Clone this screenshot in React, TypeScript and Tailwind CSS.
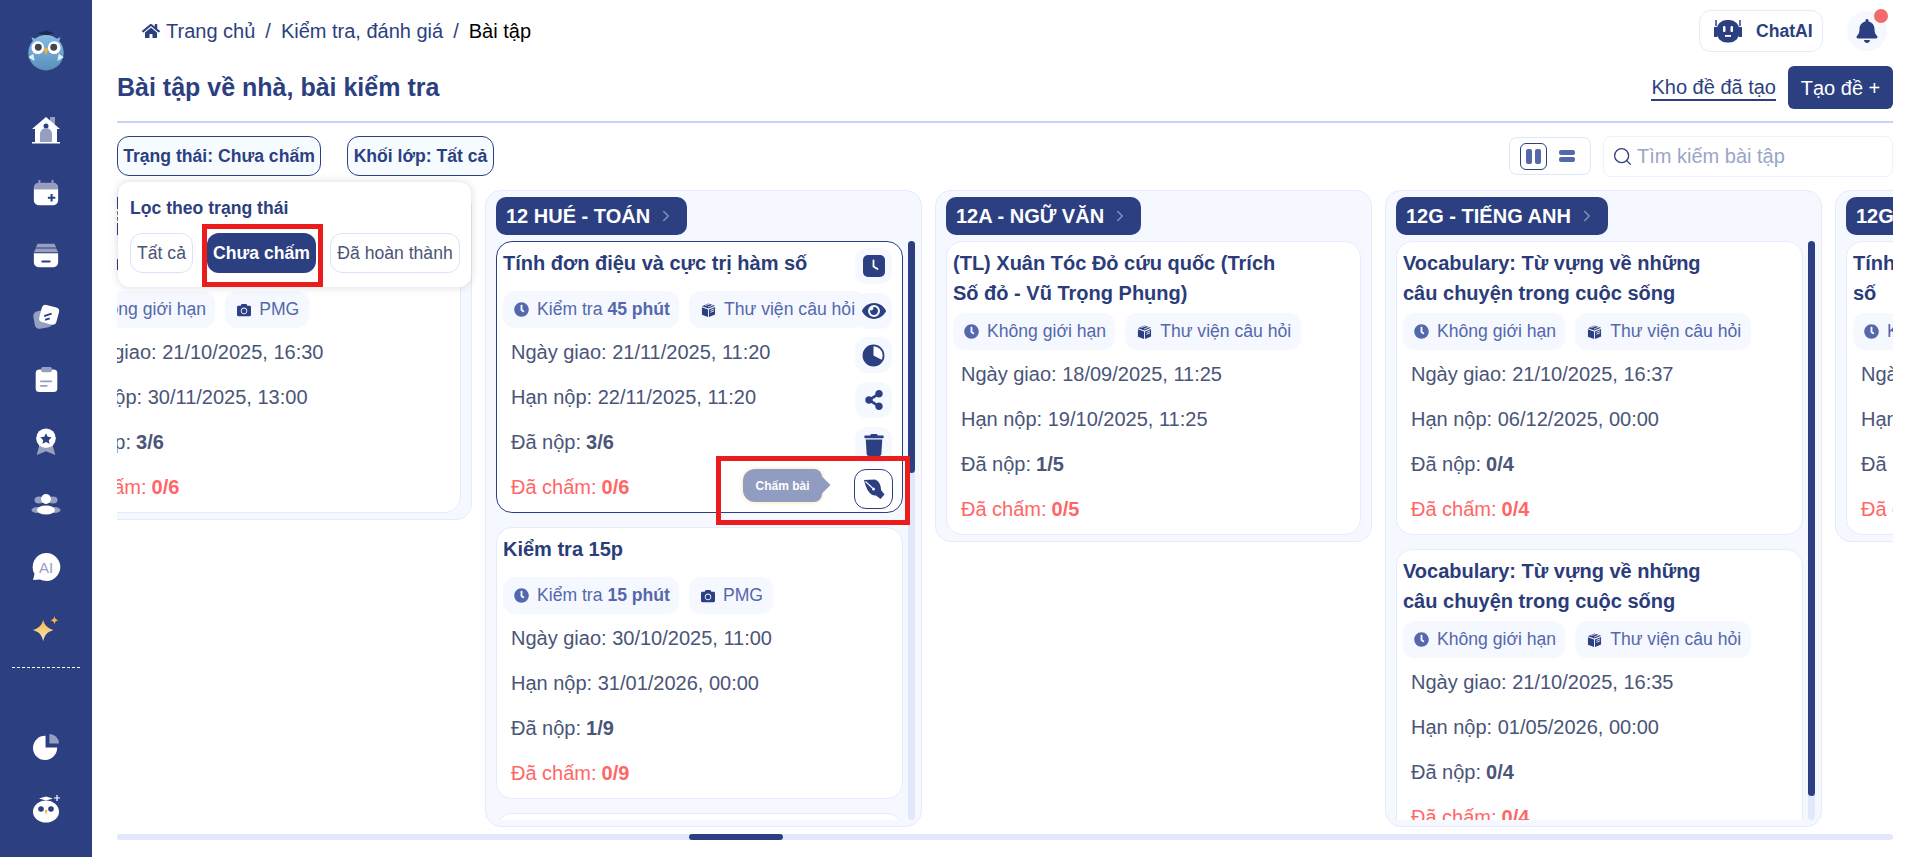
import React from "react"
import { ChevronRight, Search } from "lucide-react"
import { FaBell, FaCamera, FaClock, FaEye, FaHome, FaShareAlt, FaTrash } from "react-icons/fa"

const BooksIcon = ({ className }: { className?: string }) => (
    <svg viewBox="0 0 16 16" className={className} fill="currentColor">
        <path d="M1 4 8 1 15 3.500 8 6.500Z" />
        <path d="M1 5 7.500 7.500V15.500L1 13Z" />
        <path d="M8.500 7.500 15 4.800V12.800L8.500 15.500Z" />
        <path d="M10 8.500 14 6.800M10 10.500 14 8.800" stroke="white" strokeWidth="0.9" />
        <path d="M4.500 3.400 10 1.200M7.500 4.800 13 2.600" stroke="white" strokeWidth="0.8" />
    </svg>
)

const SquareClock = () => (
    <svg viewBox="0 0 24 24" className="w-[24px] h-[24px]">
        <rect x="1" y="1" width="22" height="22" rx="5" fill="#2c3f80" />
        <path d="M11.500 6.500V12.500L15.500 15" stroke="white" strokeWidth="1.800" fill="none" strokeLinecap="round" />
    </svg>
)

const PieIcon = () => (
    <svg viewBox="0 0 24 24" className="w-[23px] h-[23px]">
        <circle cx="12" cy="12" r="10.500" fill="white" stroke="#2c3f80" strokeWidth="1.800" />
        <path d="M12 12V1.500A10.500 10.500 0 1 0 21.500 17Z" fill="#2c3f80" />
    </svg>
)

// ngoi but cham bai
const NibIcon = () => (
    <svg viewBox="0 0 24 24" className="w-[24px] h-[24px]" fill="#2c3f80">
        <path d="M2 3 13 2.500C17 4 19 8 19 13L22.500 17.500 18.500 22 14 18.500C9 19 5 15 2 3Z" />
        <path d="M3.500 4.500 10.500 11" stroke="white" strokeWidth="1.100" />
        <circle cx="11.500" cy="12" r="1.500" fill="white" />
    </svg>
)

const OwlLogo = () => (
    <svg viewBox="0 0 44 46" className="w-[40px] h-[44px]">
        <defs>
            <linearGradient id="owlBody" x1="0" y1="0" x2="0" y2="1">
                <stop offset="0" stopColor="#86bce3" />
                <stop offset="1" stopColor="#5890bb" />
            </linearGradient>
        </defs>
        <path d="M13 4.500 22 1.500 31 4.500 22 7Z" fill="#1f2a4f" />
        <path d="M6 9 9 17H35L38 9 30 12H14Z" fill="#86bce3" />
        <circle cx="22" cy="26" r="19.500" fill="url(#owlBody)" />
        <circle cx="13" cy="20.500" r="7" fill="white" />
        <circle cx="31" cy="20.500" r="7" fill="white" />
        <circle cx="13.500" cy="20" r="3.800" fill="#44464f" />
        <circle cx="30.500" cy="20" r="3.800" fill="#44464f" />
        <path d="M19.500 21H24.500L22 29Z" fill="#f4b63a" />
        <path d="M2.500 31 8 27 9.500 35ZM41.500 31 36 27 34.500 35Z" fill="#e4f0f9" />
    </svg>
)

const navIcons = [
    // truong hoc
    <svg viewBox="0 0 30 30" className="w-[30px] h-[30px]" key="home">
        <rect x="19" y="2" width="5" height="7" fill="#969fc0" />
        <path d="M15 2 29 14H26V27H4V14H1Z" fill="white" />
        <rect x="1" y="27" width="28" height="1.500" fill="white" />
        <circle cx="15" cy="11" r="2.500" fill="#2c3f80" />
        <path d="M9 27V19A6 6 0 0 1 21 19V27Z" fill="#969fc0" />
    </svg>,
    <svg viewBox="0 0 30 30" className="w-[28px] h-[28px]" key="cal">
        <path d="M2 9A5 5 0 0 1 7 4H23A5 5 0 0 1 28 9V11H2Z" fill="#969fc0" />
        <rect x="7" y="1" width="2" height="4" fill="#969fc0" />
        <rect x="21" y="1" width="2" height="4" fill="#969fc0" />
        <path d="M2 11H28V23A5 5 0 0 1 23 28H7A5 5 0 0 1 2 23Z" fill="white" />
        <path d="M21 16V24M17 20H25" stroke="#2c3f80" strokeWidth="2.200" />
    </svg>,
    <svg viewBox="0 0 30 30" className="w-[28px] h-[28px]" key="box">
        <path d="M6 3H24L26 7H4Z" fill="#969fc0" />
        <path d="M4 8H26L28 12H2Z" fill="#969fc0" />
        <path d="M2 13H28V23A5 5 0 0 1 23 28H7A5 5 0 0 1 2 23Z" fill="white" />
        <rect x="10" y="21" width="10" height="2" rx="1" fill="#2c3f80" />
    </svg>,
    <svg viewBox="0 0 30 30" className="w-[28px] h-[28px]" key="notes">
        <rect x="2" y="8" width="19" height="19" rx="5" fill="#969fc0" transform="rotate(-10 11 17)" />
        <rect x="9" y="3" width="19" height="19" rx="4" fill="white" transform="rotate(15 18 12)" />
        <path d="M13 14 21 11.500M14 18 19 16.500" stroke="#2c3f80" strokeWidth="2" />
    </svg>,
    <svg viewBox="0 0 30 30" className="w-[27px] h-[27px]" key="clip">
        <rect x="3" y="4" width="24" height="25" rx="4" fill="white" />
        <rect x="9" y="1" width="12" height="6" rx="2" fill="#969fc0" />
        <path d="M8 17H21M8 22H16" stroke="#969fc0" strokeWidth="2" />
    </svg>,
    <svg viewBox="0 0 30 30" className="w-[28px] h-[28px]" key="badge">
        <path d="M8 18 5 29 15 25 25 29 22 18Z" fill="#969fc0" />
        <circle cx="15" cy="11" r="10.500" fill="white" />
        <path d="M15 5.500 16.800 9.500 21 10 18 13 18.800 17 15 15 11.200 17 12 13 9 10 13.200 9.500Z" fill="#2c3f80" />
    </svg>,
    <svg viewBox="0 0 30 30" className="w-[30px] h-[30px]" key="users">
        <ellipse cx="8" cy="10" rx="4.500" ry="3.500" fill="#969fc0" />
        <ellipse cx="22" cy="10" rx="4.500" ry="3.500" fill="#969fc0" />
        <ellipse cx="6" cy="20" rx="5.500" ry="3" fill="#969fc0" />
        <ellipse cx="24" cy="20" rx="5.500" ry="3" fill="#969fc0" />
        <circle cx="15" cy="9" r="5" fill="white" />
        <ellipse cx="15" cy="20" rx="9" ry="4.500" fill="white" />
    </svg>,
    <svg viewBox="0 0 30 30" className="w-[30px] h-[30px]" key="ai">
        <path d="M15 1A14 14 0 1 1 9 27.500L2 28 3.500 22A14 14 0 0 1 15 1Z" fill="white" />
        <text x="15" y="20.500" textAnchor="middle" fontSize="15" fill="#969fc0" fontFamily="Liberation Sans, sans-serif">AI</text>
    </svg>,
    <svg viewBox="0 0 30 30" className="w-[28px] h-[28px]" key="spark">
        <defs>
            <linearGradient id="spark" x1="0" y1="0" x2="0" y2="1">
                <stop offset="0" stopColor="#f5b93e" />
                <stop offset="1" stopColor="#f7e3c0" />
            </linearGradient>
        </defs>
        <path d="M12 5C13.500 11 16 13.500 23 16 16 18.500 13.500 21 12 28 10.500 21 8 18.500 1 16 8 13.500 10.500 11 12 5Z" fill="url(#spark)" />
        <path d="M24 1C24.500 4 25.500 5 28.500 5.500 25.500 6 24.500 7 24 10 23.500 7 22.500 6 19.500 5.500 22.500 5 23.500 4 24 1Z" fill="#f5b93e" />
    </svg>,
]

type Row = { giao: string; han: string; nop: string; cham: string }
type TaskProps = Row & { title: string; time: React.ReactNode; source: "lib" | "pmg"; active?: boolean }

const Task = ({ title, time, source, giao, han, nop, cham, active }: TaskProps) => {
    return (
        <div className={`relative shrink-0 bg-white rounded-2xl border pt-[6px] pb-[3px] px-[6px] ${active ? "border-[#2c3f80]" : "border-[#e6ebfc]"}`}>
            <div className="min-h-[38px] mb-[5px] max-w-[330px] text-[20px] leading-[30px] font-bold text-[#2b3c7a]">{title}</div>
            <div className="flex gap-[10px] mb-[1px] whitespace-nowrap">
                <div className="flex items-center gap-[8px] h-[37px] pl-[11px] pr-[9px] rounded-xl bg-[#f5f8ff] text-[17.6px] text-[#5468ab]">
                    <FaClock className="w-[15px] h-[15px]" />
                    <span>{time}</span>
                </div>
                <div className="flex items-center gap-[8px] h-[37px] pl-[12px] pr-[10px] rounded-xl bg-[#f5f8ff] text-[17.6px] text-[#5468ab]">
                    {source === "lib" ? <BooksIcon className="w-[15px] h-[16px] text-[#2c3f80]" /> : <FaCamera className="w-[14px] h-[14px] text-[#2c3f80]" />}
                    <span>{source === "lib" ? "Thư viện câu hỏi" : "PMG"}</span>
                </div>
            </div>
            <div className="pl-[8px] text-[20px] text-[#4a5578] whitespace-nowrap">
                <div className="h-[45px] flex items-center">Ngày giao: {giao}</div>
                <div className="h-[45px] flex items-center">Hạn nộp: {han}</div>
                <div className="h-[45px] flex items-center gap-[5px]">Đã nộp: <b>{nop}</b></div>
                <div className="h-[45px] flex items-center gap-[5px] text-[#ff6666]">Đã chấm: <b>{cham}</b></div>
            </div>
            {active && <Actions />}
        </div>
    )
}

const Actions = () => {
    const btn = "w-[37px] h-[36px] flex items-center justify-center rounded-xl bg-[#f5f8ff] text-[#2c3f80]"
    return (
        <>
            <div className="absolute top-[6px] right-[10px] flex flex-col gap-[8.7px]">
                <div className={btn}><SquareClock /></div>
                <div className={btn}><FaEye className="w-[24px] h-[24px]" /></div>
                <div className={btn}><PieIcon /></div>
                <div className={btn}><FaShareAlt className="w-[20px] h-[20px]" /></div>
                <div className={btn}><FaTrash className="w-[20px] h-[22px]" /></div>
            </div>
            <div className="absolute top-[227px] right-[9px] w-[39px] h-[40px] flex items-center justify-center rounded-xl border border-[#2c3f80] bg-white">
                <NibIcon />
            </div>
            <div className="absolute top-[227px] right-[80px] w-[79px] h-[33px] flex items-center justify-center rounded-l-xl rounded-r-lg bg-[#919dc0] shadow-[0_0_4px_#f7dfa8] text-white text-[12px] font-bold">
                Chấm bài
                <div className="absolute right-[-6px] top-[10px] w-[12px] h-[12px] rotate-45 bg-[#919dc0]"></div>
            </div>
        </>
    )
}

const Scrollbar = ({ thumb }: { thumb: string }) => (
    <div className="w-[7px] ml-[5px] shrink-0 rounded-full bg-[#e2e8fc]">
        <div className={`w-full rounded-full bg-[#2c3f80] ${thumb}`}></div>
    </div>
)

const Column = ({ name, thumb, children }: { name: string; thumb?: string; children: React.ReactNode }) => {
    return (
        <div className={`w-[437px] shrink-0 flex flex-col rounded-2xl border border-[#e6ebfc] bg-[#f5f8ff] pt-[6px] pb-[6px] pl-[10px] ${thumb ? "h-[637px] pr-[6px]" : "pr-[10px]"}`}>
            <div className="self-start flex items-center gap-[7px] h-[38px] mb-[6px] pl-[10px] pr-[12px] rounded-[10px] bg-[#2c3f80] text-white text-[20px] font-bold whitespace-nowrap">
                {name}
                <ChevronRight className="w-[18px] h-[18px] text-[#8592bc]" />
            </div>
            <div className="flex flex-1 min-h-0">
                <div className="flex-1 min-w-0 flex flex-col gap-[14px] overflow-hidden">{children}</div>
                {thumb && <Scrollbar thumb={thumb} />}
            </div>
        </div>
    )
}

const vocab = "Vocabulary: Từ vựng về những câu chuyện trong cuộc sống"
const noLimit = "Không giới hạn"

export default function App() {
    return (
        <div className="flex h-[857px] overflow-hidden bg-white font-[family-name:'Liberation_Sans',Arial,sans-serif]">
            <aside className="w-[92px] shrink-0 bg-[#2c3f80] flex flex-col items-center pt-[28px]">
                <OwlLogo />
                <div className="mt-[27px] w-full">
                    {navIcons.map((icon) => (
                        <div key={icon.key} className="h-[62.4px] flex items-center justify-center">{icon}</div>
                    ))}
                </div>
                <div className="mt-[6px] w-[68px] border-t border-dashed border-white"></div>
                <div className="mt-[64px] h-[30px] flex items-center justify-center">
                    <svg viewBox="0 0 30 30" className="w-[29px] h-[29px]">
                        <path d="M18 2A10 10 0 0 1 28 12H18Z" fill="#969fc0" />
                        <path d="M14 4V16H26A12.500 12.500 0 1 1 14 4Z" fill="white" />
                    </svg>
                </div>
                <div className="mt-[32px] h-[30px] flex items-center justify-center">
                    <svg viewBox="0 0 30 30" className="w-[30px] h-[30px]">
                        <path d="M26 1V7M23 4H29" stroke="white" strokeWidth="1.200" />
                        <path d="M8 4.500 15 2.500 22 4.500 15 6.500Z" fill="white" />
                        <path d="M2 18A13 11.500 0 0 1 28 18A13 10.500 0 0 1 2 18Z" fill="white" />
                        <circle cx="10" cy="15" r="2.800" fill="#2c3f80" />
                        <circle cx="20" cy="15" r="2.800" fill="#2c3f80" />
                        <path d="M13.500 16H16.500L15 21Z" fill="#f4b63a" />
                    </svg>
                </div>
            </aside>

            <main className="relative flex-1 min-w-0 pl-[25px] pr-[20px] pt-[10px]">
                <div className="flex items-center justify-between h-[42px]">
                    <div className="flex items-center pl-[25px] text-[20px] text-[#2c3f80]">
                        <FaHome className="w-[18px] h-[18px] mr-[6px]" />
                        <span>Trang chủ</span>
                        <span className="mx-[10px]">/</span>
                        <span>Kiểm tra, đánh giá</span>
                        <span className="mx-[10px]">/</span>
                        <span className="text-black">Bài tập</span>
                    </div>
                    <div className="flex items-center gap-[24px] mr-[6px]">
                        <div className="flex items-center gap-[13px] h-[42px] w-[124px] pl-[13px] rounded-xl border border-[#e6ebfc] bg-white">
                            <svg viewBox="0 0 30 24" className="w-[30px] h-[24px]">
                                <path d="M1 8H4V18H1ZM26 8H29V18H26Z" fill="#2c3f80" />
                                <path d="M3 1V7M27 1V7" stroke="#2c3f80" strokeWidth="1.500" />
                                <rect x="3.500" y="1" width="23" height="22.500" rx="10" fill="#2c3f80" />
                                <rect x="10" y="7" width="2.500" height="6" rx="1" fill="white" />
                                <rect x="17.500" y="7" width="2.500" height="6" rx="1" fill="white" />
                                <rect x="12" y="16" width="6" height="1.800" fill="white" />
                            </svg>
                            <span className="text-[17.6px] font-bold text-[#2c3f80]">ChatAI</span>
                        </div>
                        <div className="relative w-[40px] h-[40px] rounded-full bg-[#f5f8ff] flex items-center justify-center text-[#2c3f80]">
                            <FaBell className="w-[22px] h-[24px]" />
                            <div className="absolute -top-[2px] -right-[1px] w-[14px] h-[14px] rounded-full bg-[#f26a6a]"></div>
                        </div>
                    </div>
                </div>

                <div className="mt-[14px] flex items-center justify-between h-[43px]">
                    <h1 className="text-[25px] font-bold text-[#2c3f80]">Bài tập về nhà, bài kiểm tra</h1>
                    <div className="flex items-center gap-[12px]">
                        <span className="text-[20px] leading-[24px] text-[#2c3f80] border-b-2 border-[#2c3f80]">Kho đề đã tạo</span>
                        <button className="h-[43px] w-[105px] rounded-md bg-[#2c3f80] text-white text-[20px]">Tạo đề +</button>
                    </div>
                </div>

                <div className="mt-[12px] h-[2px] bg-[#c5d5f7]"></div>

                <div className="mt-[13px] flex items-center h-[40px]">
                    <button className="h-[40px] w-[204px] rounded-xl border border-[#2c3f80] bg-[#f5fbff] text-[17.6px] font-bold text-[#2c3f80] whitespace-nowrap">Trạng thái: Chưa chấm</button>
                    <button className="ml-[26px] h-[40px] w-[147px] rounded-xl border border-[#2c3f80] bg-[#f5fbff] text-[17.6px] font-bold text-[#2c3f80] whitespace-nowrap">Khối lớp: Tất cả</button>
                    <div className="ml-auto flex items-center gap-[12px] h-[38px] w-[82px] px-[10px] rounded-lg border border-[#dfe6fb]">
                        <div className="w-[27px] h-[27px] flex items-center justify-center gap-[3px] rounded-md border border-[#2c3f80]">
                            <div className="w-[6px] h-[15px] rounded-[2px] bg-[#5468ab]"></div>
                            <div className="w-[6px] h-[15px] rounded-[2px] bg-[#5468ab]"></div>
                        </div>
                        <div className="flex flex-col gap-[2px]">
                            <div className="w-[16px] h-[5px] rounded-[2px] bg-[#5468ab]"></div>
                            <div className="w-[16px] h-[5px] rounded-[2px] bg-[#5468ab]"></div>
                        </div>
                    </div>
                    <div className="ml-[12px] flex items-center gap-[4px] h-[41px] w-[290px] pl-[8px] rounded-lg border border-[#eef1fc] text-[20px] text-[#9aa5c9]">
                        <Search className="w-[21px] h-[21px] text-[#2c3f80]" strokeWidth={1.5} />
                        <span>Tìm kiếm bài tập</span>
                    </div>
                </div>

                <div className="mt-[14px] h-[637px] overflow-hidden">
                    <div className="flex items-start gap-[13px] -ml-[82px]">
                        <Column name="12 HUÉ - ĐỊA LÝ">
                            <Task title="Kiểm tra giữa kỳ" time={noLimit} source="pmg" giao="21/10/2025, 16:30" han="30/11/2025, 13:00" nop="3/6" cham="0/6" />
                        </Column>
                        <Column name="12 HUÉ - TOÁN" thumb="h-[232px]">
                            <Task active title="Tính đơn điệu và cực trị hàm số" time={<>Kiểm tra <b>45 phút</b></>} source="lib" giao="21/11/2025, 11:20" han="22/11/2025, 11:20" nop="3/6" cham="0/6" />
                            <Task title="Kiểm tra 15p" time={<>Kiểm tra <b>15 phút</b></>} source="pmg" giao="30/10/2025, 11:00" han="31/01/2026, 00:00" nop="1/9" cham="0/9" />
                            <Task title="Kiểm tra 15p" time={<>Kiểm tra <b>15 phút</b></>} source="pmg" giao="30/10/2025, 11:00" han="31/01/2026, 00:00" nop="1/9" cham="0/9" />
                        </Column>
                        <Column name="12A - NGỮ VĂN">
                            <Task title="(TL) Xuân Tóc Đỏ cứu quốc (Trích Số đỏ - Vũ Trọng Phụng)" time={noLimit} source="lib" giao="18/09/2025, 11:25" han="19/10/2025, 11:25" nop="1/5" cham="0/5" />
                        </Column>
                        <Column name="12G - TIẾNG ANH" thumb="h-[555px]">
                            <Task title={vocab} time={noLimit} source="lib" giao="21/10/2025, 16:37" han="06/12/2025, 00:00" nop="0/4" cham="0/4" />
                            <Task title={vocab} time={noLimit} source="lib" giao="21/10/2025, 16:35" han="01/05/2026, 00:00" nop="0/4" cham="0/4" />
                        </Column>
                        <Column name="12G - TOÁN">
                            <Task title="Tính đơn điệu và cực trị của hàm số" time={noLimit} source="lib" giao="21/10/2025, 16:30" han="30/11/2025, 13:00" nop="0/4" cham="0/4" />
                        </Column>
                    </div>
                </div>

                <div className="mt-[7px] h-[6px] rounded-full bg-[#e2e8fc]">
                    <div className="ml-[572px] w-[94px] h-full rounded-full bg-[#2c3f80]"></div>
                </div>

                <div className="absolute left-[26px] top-[182px] w-[353px] h-[105px] rounded-xl bg-white shadow-[0_0_8px_rgba(0,0,0,0.15)] pl-[12px] pt-[14px]">
                    <div className="text-[17.6px] leading-[24px] font-bold text-[#2c3f80]">Lọc theo trạng thái</div>
                    <div className="mt-[13px] flex gap-[14px] whitespace-nowrap text-[17.6px]">
                        <div className="h-[40px] w-[63px] flex items-center justify-center rounded-xl border border-[#d9e2fb] text-[#4a5578]">Tất cả</div>
                        <div className="h-[40px] w-[109px] flex items-center justify-center rounded-xl bg-[#2c3f80] text-white font-bold">Chưa chấm</div>
                        <div className="h-[40px] w-[130px] flex items-center justify-center rounded-xl border border-[#d9e2fb] text-[#4a5578]">Đã hoàn thành</div>
                    </div>
                    <div className="absolute left-[84px] top-[42px] w-[121px] h-[63px] border-[5px] border-[#ea1c1c]"></div>
                </div>

                <div className="absolute left-[624px] top-[456px] w-[194px] h-[69px] border-[5px] border-[#ea1c1c]"></div>
            </main>
        </div>
    )
}
